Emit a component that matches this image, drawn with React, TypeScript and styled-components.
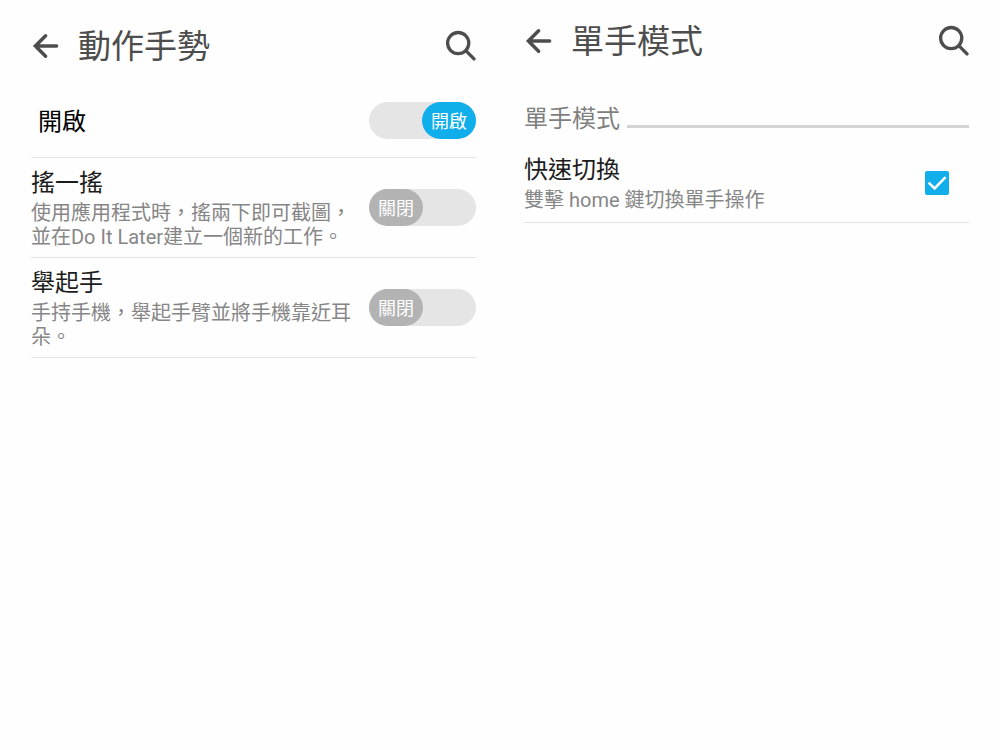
import React, { useId, useState } from "react";
import styled, { createGlobalStyle } from "styled-components";

const GlobalStyle = createGlobalStyle`
  *, *::before, *::after { box-sizing: border-box; }
  body {
    margin: 0;
    background: #fefefe;
    color: #1c1c1c;
    font-family: Roboto, "Noto Sans CJK TC", sans-serif;
  }
  h1, h2, h3, p { margin: 0; font-weight: 400; }
`;

const Page = styled.main`
  display: grid;
  grid-template-columns: 1fr 1fr;
`;

const Panel = styled.section<{ $side: "left" | "right" }>`
  min-width: 0;
  padding: ${(p) => (p.$side === "left" ? "8px 24px 0 31px" : "3px 31px 0 24px")};
`;

const Header = styled.header`
  display: flex;
  align-items: center;
  height: 76px;
`;

const IconButton = styled.button`
  display: flex;
  padding: 0;
  border: 0;
  background: none;
  color: #4d4d4d;
  cursor: pointer;
`;

const Title = styled.h1`
  flex: 1;
  margin-left: 18px;
  padding-top: 2px;
  color: #4d4d4d;
  font-size: 33px;
  line-height: 40px;
`;

const SectionHeader = styled.div`
  display: flex;
  align-items: flex-end;
  gap: 7px;
  padding: 25px 0 9px;
`;

const SectionTitle = styled.h2`
  color: #7f7f7f;
  font-size: 24px;
  line-height: 30px;
`;

const SectionRule = styled.span`
  flex: 1;
  height: 3px;
  margin-bottom: 6px;
  background: #d3d3d3;
`;

const rowPadding = {
  master: "0 0 0 7px",
  regular: "8px 0",
  roomy: "10px 0",
};

const Row = styled.div<{ $kind: keyof typeof rowPadding }>`
  display: flex;
  align-items: center;
  justify-content: space-between;
  gap: 16px;
  min-height: 74px;
  padding: ${(p) => rowPadding[p.$kind]};
  border-bottom: 1px solid #e3e3e3;
`;

const RowText = styled.div`
  flex: 1;
  min-width: 0;
  padding-top: 2px;
`;

const RowTitle = styled.label<{ $strong?: boolean }>`
  display: block;
  color: ${(p) => (p.$strong ? "#000" : "#1c1c1c")};
  font-size: 24px;
  line-height: 30px;
`;

const RowNote = styled.p`
  margin-top: 3px;
  color: #868686;
  font-size: 20px;
  line-height: 24px;
`;

const SwitchTrack = styled.span<{ $on: boolean }>`
  position: relative;
  display: flex;
  flex: none;
  justify-content: ${(p) => (p.$on ? "flex-end" : "flex-start")};
  width: 107px;
  height: 37px;
  border-radius: 19px;
  background: #e5e5e5;
`;

const SwitchInput = styled.input`
  position: absolute;
  inset: 0;
  width: 100%;
  height: 100%;
  margin: 0;
  opacity: 0;
  cursor: pointer;
`;

const SwitchThumb = styled.span<{ $on: boolean }>`
  display: flex;
  align-items: center;
  justify-content: center;
  width: 54px;
  padding-top: 2px;
  border-radius: 19px;
  background: ${(p) => (p.$on ? "#10aeeb" : "#b3b3b3")};
  color: #fff;
  font-size: 18px;
  line-height: 24px;
`;

const CheckHolder = styled.span`
  display: grid;
  flex: none;
  margin-right: 20px;
  > * { grid-area: 1 / 1; }
  svg { pointer-events: none; }
`;

const CheckInput = styled.input`
  width: 24px;
  height: 24px;
  margin: 0;
  appearance: none;
  border: 2px solid #8a8a8a;
  border-radius: 2px;
  cursor: pointer;
  &:checked { border-color: #10aeeb; background: #10aeeb; }
`;

function PanelHeader({ title }: { title: string }) {
  return (
    <Header>
      <IconButton type="button" aria-label="返回">
        <svg width="29" height="28" viewBox="0 0 29 28" fill="none" stroke="currentColor" strokeWidth="3.5" strokeLinecap="round">
          <path d="M14.6 3.8 4.4 14 14.6 24.2M4.4 14H25.6" />
        </svg>
      </IconButton>
      <Title>{title}</Title>
      <IconButton type="button" aria-label="搜尋">
        <svg width="31" height="32" viewBox="0 0 31 32" fill="none" stroke="currentColor" strokeWidth="3.3">
          <circle cx="13.2" cy="13.1" r="10.6" />
          <path d="m20.8 20.7 8.2 8.2" strokeLinecap="round" />
        </svg>
      </IconButton>
    </Header>
  );
}

type SwitchRowProps = { title: string; note?: string; initial?: boolean };

function SwitchRow({ title, note, initial = false }: SwitchRowProps) {
  const id = useId();
  const [on, setOn] = useState(initial);
  return (
    <Row $kind={note ? "regular" : "master"}>
      <RowText>
        <RowTitle htmlFor={id} $strong={!note}>{title}</RowTitle>
        {note && <RowNote>{note}</RowNote>}
      </RowText>
      <SwitchTrack $on={on}>
        <SwitchThumb $on={on}>{on ? "開啟" : "關閉"}</SwitchThumb>
        <SwitchInput id={id} type="checkbox" role="switch" checked={on} onChange={() => setOn(!on)} />
      </SwitchTrack>
    </Row>
  );
}

function CheckRow({ title, note }: { title: string; note: string }) {
  const id = useId();
  const [checked, setChecked] = useState(true);
  return (
    <Row $kind="roomy">
      <RowText>
        <RowTitle htmlFor={id}>{title}</RowTitle>
        <RowNote>{note}</RowNote>
      </RowText>
      <CheckHolder>
        <CheckInput id={id} type="checkbox" checked={checked} onChange={() => setChecked(!checked)} />
        {checked && (
          <svg width="24" height="24" viewBox="0 0 24 24" fill="none" stroke="#fff" strokeWidth="2.6">
            <path d="m3.6 11.6 6 5.8L20.6 6.2" />
          </svg>
        )}
      </CheckHolder>
    </Row>
  );
}

export default function App() {
  return (
    <>
      <GlobalStyle />
      <Page lang="zh-Hant">
        <Panel $side="left">
          <PanelHeader title="動作手勢" />
          <SwitchRow title="開啟" initial />
          <SwitchRow title="搖一搖" note="使用應用程式時，搖兩下即可截圖，並在Do It Later建立一個新的工作。" />
          <SwitchRow title="舉起手" note="手持手機，舉起手臂並將手機靠近耳朵。" />
        </Panel>
        <Panel $side="right">
          <PanelHeader title="單手模式" />
          <SectionHeader>
            <SectionTitle>單手模式</SectionTitle>
            <SectionRule />
          </SectionHeader>
          <CheckRow title="快速切換" note="雙擊 home 鍵切換單手操作" />
        </Panel>
      </Page>
    </>
  );
}
